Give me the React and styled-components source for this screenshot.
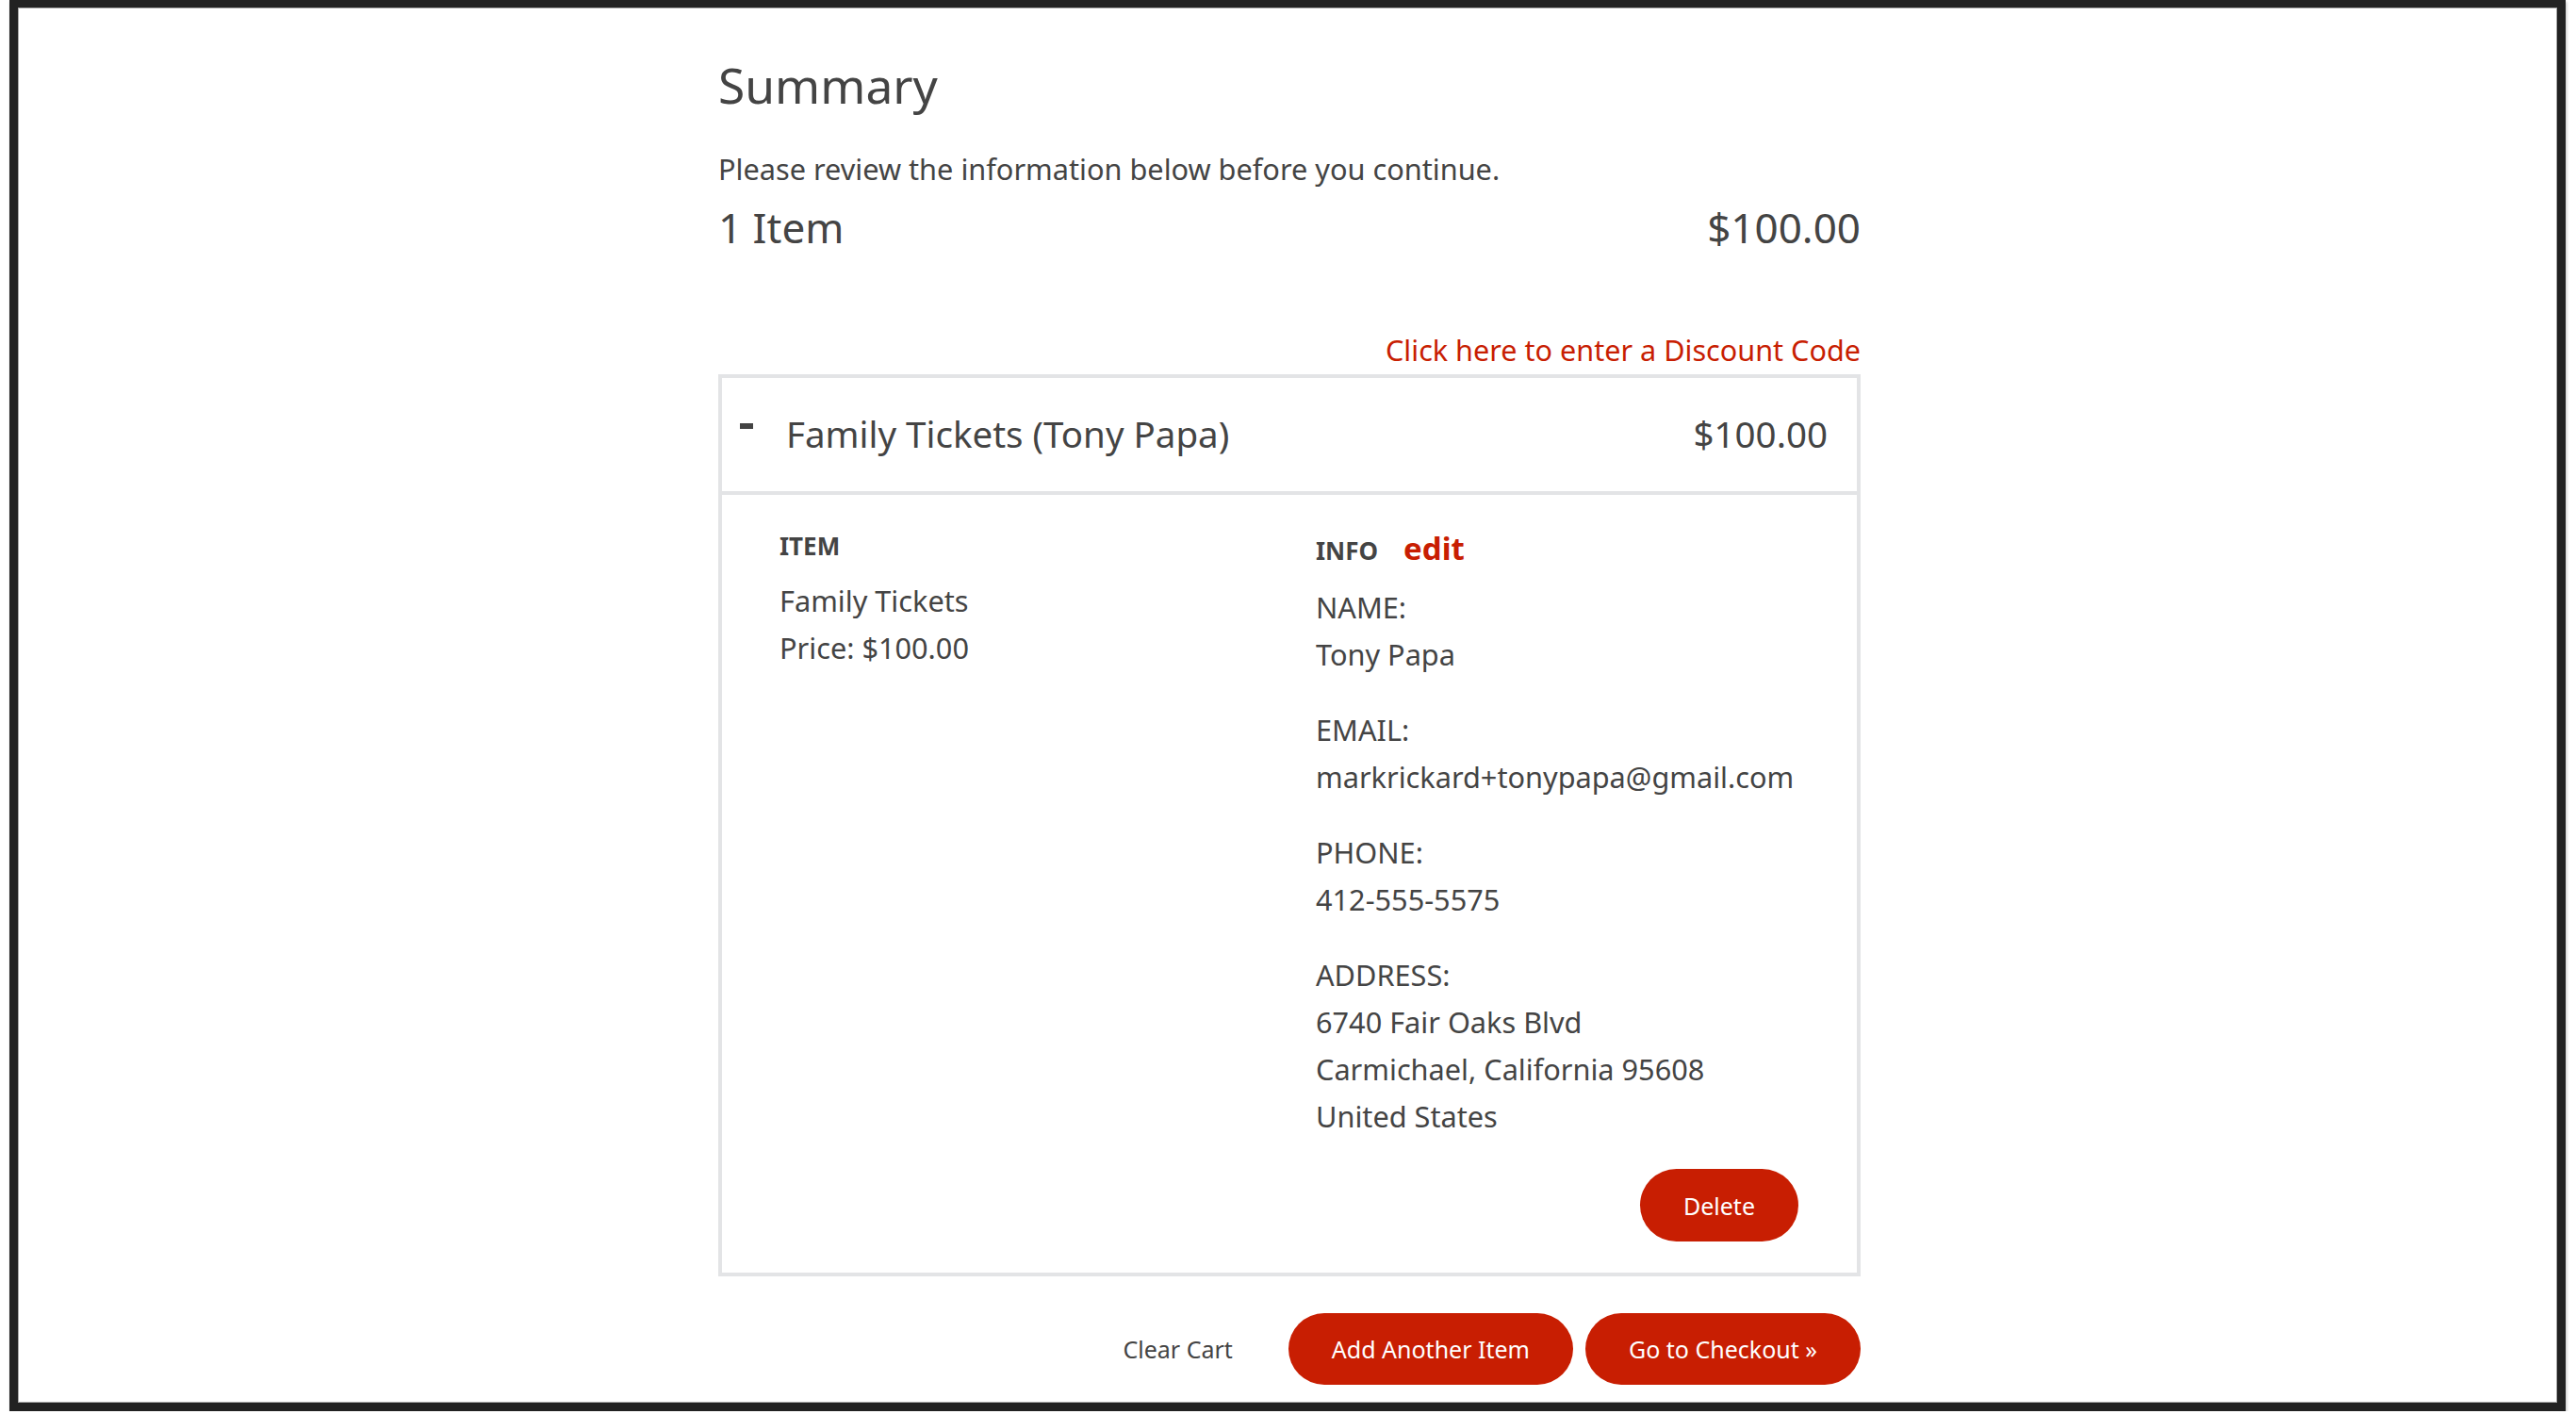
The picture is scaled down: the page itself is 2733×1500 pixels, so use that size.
import React from 'react'
import styled, { createGlobalStyle } from 'styled-components'

const GlobalStyle = createGlobalStyle`
  html, body {
    margin: 0;
    padding: 0;
    background: #fff;
  }
  body {
    font-family: "Noto Sans", "Open Sans", Arial, sans-serif;
    color: #444;
  }
  * { box-sizing: border-box; }
`

const red = '#c81e02'
const line = '#e3e4e6'

const cart = {
  count: 1,
  total: '$100.00',
  items: [
    {
      id: 1,
      title: 'Family Tickets (Tony Papa)',
      product: 'Family Tickets',
      price: '$100.00',
      info: [
        { label: 'NAME:', lines: ['Tony Papa'] },
        { label: 'EMAIL:', lines: ['markrickard+tonypapa@gmail.com'] },
        { label: 'PHONE:', lines: ['412-555-5575'] },
        { label: 'ADDRESS:', lines: ['6740 Fair Oaks Blvd', 'Carmichael, California 95608', 'United States'] },
      ],
    },
  ],
}

function CartItem({ item }) {
  return (
    <Card>
      <CardHeader>
        <Collapse aria-label="collapse" />
        <ItemTitle>{item.title}</ItemTitle>
        <ItemPrice>{item.price}</ItemPrice>
      </CardHeader>
      <CardBody>
        <Column>
          <Heading>ITEM</Heading>
          <Text>{item.product}</Text>
          <Text>Price: {item.price}</Text>
        </Column>
        <Column>
          <Heading $info>
            INFO<EditLink href="#">edit</EditLink>
          </Heading>
          {item.info.map(group => (
            <Group key={group.label}>
              <Text>{group.label}</Text>
              {group.lines.map(l => <Text key={l}>{l}</Text>)}
            </Group>
          ))}
          <Button $small>Delete</Button>
        </Column>
      </CardBody>
    </Card>
  )
}

export default function App() {
  return (
    <>
      <GlobalStyle />
      <Frame>
        <Summary>
          <Title>Summary</Title>
          <Lead>Please review the information below before you continue.</Lead>
          <TotalRow>
            <span>{cart.count} Item</span>
            <span>{cart.total}</span>
          </TotalRow>
          <DiscountRow>
            <DiscountLink href="#">Click here to enter a Discount Code</DiscountLink>
          </DiscountRow>
          {cart.items.map(item => <CartItem key={item.id} item={item} />)}
          <Actions>
            <Button $plain>Clear Cart</Button>
            <Button>Add Another Item</Button>
            <Button>Go to Checkout »</Button>
          </Actions>
        </Summary>
      </Frame>
    </>
  )
}

const Frame = styled.div`
  width: 2712px;
  height: 1497px;
  margin-left: 10px;
  border: 9px solid #222;
  border-top-width: 8px;
  box-shadow: 1px 2px 3px rgba(0, 0, 0, 0.25), inset 0 0 0 1px #aaa;
  padding-left: 4px;
  background: #fff;
`

const Summary = styled.div`
  width: 1212px;
  margin: 0 auto;
  padding-top: 48px;
`

const Title = styled.h1`
  margin: 0;
  font-size: 51.5px;
  line-height: 68px;
  font-weight: 400;
`

const Lead = styled.p`
  margin: 35px 0 0;
  font-size: 30.7px;
  line-height: 40px;
`

const TotalRow = styled.div`
  display: flex;
  justify-content: space-between;
  margin-top: 14px;
  font-size: 44px;
  line-height: 56px;
`

const DiscountRow = styled.div`
  display: flex;
  justify-content: flex-end;
  margin-top: 82px;
  margin-bottom: 6px;
  font-size: 30.6px;
  line-height: 40px;
`

const DiscountLink = styled.a`
  color: ${red};
  text-decoration: none;
`

const Card = styled.div`
  border: 4px solid ${line};
`

const CardHeader = styled.div`
  display: flex;
  align-items: flex-start;
  height: 124px;
  padding: 35px 31px 0 19px;
  border-bottom: 4px solid ${line};
  font-size: 38.5px;
  line-height: 48px;
`

const Collapse = styled.span`
  width: 14px;
  height: 6px;
  margin: 13px 35px 0 0;
  background: #444;
`

const ItemTitle = styled.span`
  flex: 1;
`

const ItemPrice = styled.span``

const CardBody = styled.div`
  display: grid;
  grid-template-columns: 1fr 1fr;
  column-gap: 57px;
  align-items: start;
  padding: 36px 62px 33px 61px;
`

const Column = styled.div`
  display: flex;
  flex-direction: column;
`

const Heading = styled.h4`
  margin: 0 0 ${p => (p.$info ? '22px' : '15px')};
  padding-top: ${p => (p.$info ? '3px' : '0')};
  height: 36px;
  font-size: 26px;
  line-height: 36px;
  font-weight: 700;
  white-space: nowrap;
`

const EditLink = styled.a`
  margin-left: 27px;
  font-size: 33px;
  line-height: 36px;
  color: ${red};
  text-decoration: none;
`

const Group = styled.div`
  margin-bottom: 30px;
  &:last-of-type { margin-bottom: 0; }
`

const Text = styled.div`
  font-size: 30.7px;
  line-height: 50px;
`

const Button = styled.button`
  align-self: ${p => (p.$small ? 'flex-end' : 'auto')};
  margin-top: ${p => (p.$small ? '31px' : '0')};
  height: ${p => (p.$small ? '77px' : '76px')};
  padding: 0 46px;
  border: 0;
  border-radius: 40px;
  background: ${p => (p.$plain ? 'transparent' : red)};
  color: ${p => (p.$plain ? '#444' : '#fff')};
  font-family: "Noto Sans", "Open Sans", Arial, sans-serif;
  font-size: 25px;
  cursor: pointer;
`

const Actions = styled.div`
  display: flex;
  justify-content: flex-end;
  gap: 13px;
  margin-top: 39px;
`
